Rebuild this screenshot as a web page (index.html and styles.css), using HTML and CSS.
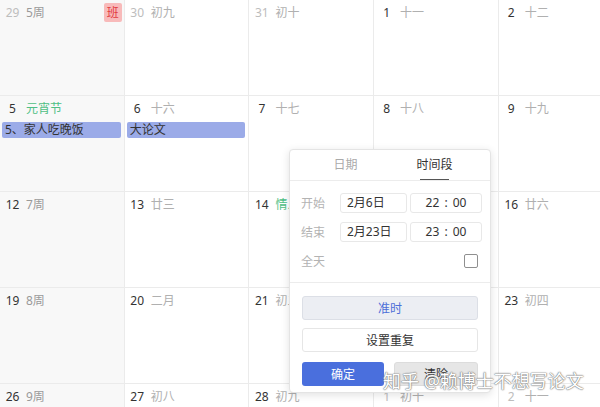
FILE: index.html
```html
<!DOCTYPE html>
<html>
<head>
	<meta charset="utf-8">
	<title>日历</title>
	<link rel="stylesheet" href="styles.css">
</head>
<body>
	<div class="calendar">
		<!-- row 1 -->
		<div class="cell sun"><div class="head"><span class="num past">29</span><span class="lunar week">5周</span></div><span class="ban">班</span></div>
		<div class="cell"><div class="head"><span class="num past">30</span><span class="lunar">初九</span></div></div>
		<div class="cell"><div class="head"><span class="num past">31</span><span class="lunar">初十</span></div></div>
		<div class="cell"><div class="head"><span class="num">1</span><span class="lunar">十一</span></div></div>
		<div class="cell"><div class="head"><span class="num">2</span><span class="lunar">十二</span></div></div>
		<!-- row 2 -->
		<div class="cell sun"><div class="head"><span class="num">5</span><span class="lunar fest">元宵节</span></div><div class="event">5、家人吃晚饭</div></div>
		<div class="cell"><div class="head"><span class="num">6</span><span class="lunar">十六</span></div><div class="event">大论文</div></div>
		<div class="cell"><div class="head"><span class="num">7</span><span class="lunar">十七</span></div></div>
		<div class="cell"><div class="head"><span class="num">8</span><span class="lunar">十八</span></div></div>
		<div class="cell"><div class="head"><span class="num">9</span><span class="lunar">十九</span></div></div>
		<!-- row 3 -->
		<div class="cell sun"><div class="head"><span class="num">12</span><span class="lunar week">7周</span></div></div>
		<div class="cell"><div class="head"><span class="num">13</span><span class="lunar">廿三</span></div></div>
		<div class="cell"><div class="head"><span class="num">14</span><span class="lunar fest">情人节</span></div></div>
		<div class="cell"><div class="head"><span class="num">15</span><span class="lunar">廿五</span></div></div>
		<div class="cell"><div class="head"><span class="num">16</span><span class="lunar">廿六</span></div></div>
		<!-- row 4 -->
		<div class="cell sun"><div class="head"><span class="num">19</span><span class="lunar week">8周</span></div></div>
		<div class="cell"><div class="head"><span class="num">20</span><span class="lunar">二月</span></div></div>
		<div class="cell"><div class="head"><span class="num">21</span><span class="lunar">初二</span></div></div>
		<div class="cell"><div class="head"><span class="num">22</span><span class="lunar">初三</span></div></div>
		<div class="cell"><div class="head"><span class="num">23</span><span class="lunar">初四</span></div></div>
		<!-- row 5 -->
		<div class="cell sun"><div class="head"><span class="num">26</span><span class="lunar week">9周</span></div></div>
		<div class="cell"><div class="head"><span class="num">27</span><span class="lunar">初八</span></div></div>
		<div class="cell"><div class="head"><span class="num">28</span><span class="lunar">初九</span></div></div>
		<div class="cell"><div class="head"><span class="num past">1</span><span class="lunar">初十</span></div></div>
		<div class="cell"><div class="head"><span class="num past">2</span><span class="lunar">十一</span></div></div>
	</div>

	<div class="popup">
		<div class="tabs">
			<span class="tab">日期</span>
			<span class="tab active">时间段</span>
		</div>
		<div class="form">
			<div class="row">
				<span class="label">开始</span>
				<span class="field date">2月6日</span>
				<span class="field time">22 : 00</span>
			</div>
			<div class="row">
				<span class="label">结束</span>
				<span class="field date">2月23日</span>
				<span class="field time">23 : 00</span>
			</div>
			<div class="row allday">
				<span class="label">全天</span>
				<span class="check"></span>
			</div>
		</div>
		<div class="actions">
			<button class="btn ontime">准时</button>
			<button class="btn repeat">设置重复</button>
			<div class="pair">
				<button class="btn ok">确定</button>
				<button class="btn clear">清除</button>
			</div>
		</div>
	</div>

	<div class="watermark">知乎 @赖博士不想写论文</div>
</body>
</html>
```

FILE: styles.css
```css
html, body {
	margin: 0;
	padding: 0;
	background: #fff;
	overflow: hidden;
	font-family: "Noto Sans", "Noto Sans CJK SC", sans-serif;
}
body {
	width: 600px;
	height: 407px;
	position: relative;
}
.calendar {
	display: grid;
	grid-template-columns: repeat(4, 124.7px) 101.2px;
	grid-template-rows: repeat(4, 96px) 23px;
	width: 600px;
	height: 407px;
	overflow: hidden;
}
.cell {
	position: relative;
	box-sizing: border-box;
	border-right: 1px solid #ebebeb;
	border-bottom: 1px solid #ebebeb;
	background: #fff;
}
.cell:nth-child(5n) {
	border-right: none;
}
.cell:nth-last-child(-n+5) {
	border-bottom: none;
}
.cell.sun {
	background: #f8f8f8;
}
.head {
	display: flex;
	align-items: center;
	padding: 5px 0 0 3px;
	height: 15px;
	line-height: 15px;
}
.num {
	width: 19px;
	text-align: center;
	font-size: 12px;
	color: #333;
	margin-right: 4px;
}
.num.past {
	color: #bdbdbd;
}
.lunar {
	font-size: 12px;
	color: #b0b0b0;
}
.lunar.week {
	color: #9a9a9a;
}
.lunar.fest {
	color: #4fbf85;
}
.ban {
	position: absolute;
	top: 3px;
	right: 2px;
	width: 18px;
	height: 19px;
	line-height: 19px;
	text-align: center;
	font-size: 12px;
	background: #f8baba;
	color: #e23a3f;
	border-radius: 2px;
}
.event {
	margin: 6px 3px 0 2px;
	height: 16px;
	line-height: 16px;
	padding-left: 3px;
	font-size: 12px;
	color: #333;
	background: #9babe8;
	border-radius: 2px;
}

/* time popup */
.popup {
	position: absolute;
	left: 289px;
	top: 149px;
	width: 202px;
	height: 244px;
	box-sizing: border-box;
	background: #fff;
	border: 1px solid #e4e4e4;
	border-radius: 4px;
	box-shadow: 0 2px 8px rgba(0, 0, 0, 0.12);
}
.tabs {
	display: flex;
	padding: 0 11px;
	height: 30px;
	border-bottom: 1px solid #ececec;
}
.tab {
	flex: 1;
	text-align: center;
	font-size: 12px;
	line-height: 29px;
	color: #aaa;
}
.tab.active {
	color: #333;
	position: relative;
}
.tab.active::after {
	content: "";
	position: absolute;
	left: 30px;
	right: 30px;
	bottom: 0;
	height: 1px;
	background: #555;
}
.form {
	padding: 12px 8px 0 11px;
	height: 89px;
	border-bottom: 1px solid #ececec;
}
.row {
	display: flex;
	align-items: center;
	gap: 3px;
	height: 20px;
	margin-bottom: 9px;
}
.label {
	width: 36px;
	flex-shrink: 0;
	font-size: 12px;
	color: #b3b3b3;
}
.field {
	box-sizing: border-box;
	flex-shrink: 0;
	height: 20px;
	line-height: 18px;
	border: 1px solid #e8e8e8;
	border-radius: 3px;
	font-size: 12px;
	color: #333;
}
.field.date {
	width: 67px;
	padding-left: 6px;
}
.field.time {
	width: 72px;
	text-align: center;
	word-spacing: 2px;
}
.allday {
	justify-content: space-between;
}
.check {
	width: 12px;
	height: 12px;
	border: 1px solid #8f8f8f;
	border-radius: 2px;
	margin-right: 4px;
}
.actions {
	display: flex;
	flex-direction: column;
	gap: 8px;
	padding: 13px 12px 0 12px;
}
.btn {
	box-sizing: border-box;
	height: 24px;
	font-family: inherit;
	font-size: 12px;
	border-radius: 3px;
	cursor: pointer;
	padding: 0;
}
.btn.ontime {
	background: #eceef3;
	border: 1px solid #dcdfe6;
	color: #4d6fd8;
}
.btn.repeat {
	background: #fff;
	border: 1px solid #e6e6e6;
	color: #333;
}
.pair {
	display: flex;
	gap: 10px;
	margin-top: 2px;
}
.pair .btn {
	flex: 1;
	height: 24px;
}
.btn.ok {
	background: #4a6fdd;
	border: none;
	color: #fff;
}
.btn.clear {
	background: #e6e6e6;
	border: 1px solid #dcdcdc;
	color: #333;
}
.watermark {
	position: absolute;
	left: 383px;
	top: 367px;
	font-size: 18px;
	color: #fff;
	text-shadow: 0 0 1px #777, 0 0 1px #777, 0 0 2px #999;
	white-space: nowrap;
}
```
